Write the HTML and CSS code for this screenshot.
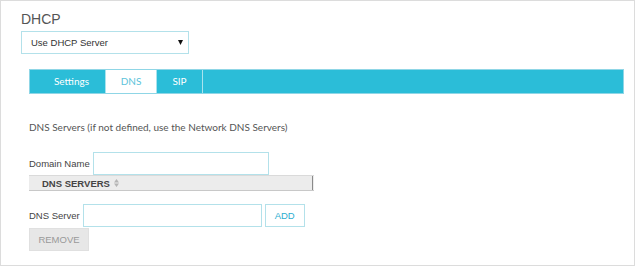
FILE: index.html
```html
<!DOCTYPE html>
<html lang="en">
<head>
  <meta charset="UTF-8">
  <title>DHCP</title>
  <link rel="stylesheet" href="styles.css">
</head>
<body>
  <div class="panel">
    <h2 class="title">DHCP</h2>
    <div class="select">
      <span>Use DHCP Server</span>
      <svg class="caret" width="5" height="5" viewBox="0 0 5 5"><path d="M0 0H5L2.5 5Z" fill="#111"/></svg>
    </div>

    <div class="content">
      <div class="tabs">
        <div class="tab first">Settings</div>
        <div class="tab active">DNS</div>
        <div class="tab sip">SIP</div>
      </div>

      <p class="note">DNS Servers (if not defined, use the Network DNS Servers)</p>

      <div class="row domain-row">
        <label for="domain">Domain Name</label>
        <input id="domain" class="domain" />
      </div>

      <div class="grid-head">
        <div class="col">
          <span>DNS SERVERS</span>
          <svg class="sort" width="5" height="8" viewBox="0 0 5 8"><path d="M0 3.5H5L2.5 0Z M0 4.5H5L2.5 8Z" fill="#b5b5b5"/></svg>
        </div>
        <div class="col-end"></div>
      </div>

      <div class="row server-row">
        <label for="server">DNS Server</label>
        <input id="server" class="server" />
        <button class="add">ADD</button>
      </div>
      <button class="remove">REMOVE</button>
    </div>
  </div>
</body>
</html>
```

FILE: styles.css
```css
body { margin: 0; font-family: "Liberation Sans", Arial, sans-serif; }
.panel { width: 635px; height: 266px; box-sizing: border-box; border: 1px solid #dcdcdc; padding: 0 10px 0 20px; background: #fff; }
.title { margin: 10px 0 4px; font-size: 14px; line-height: 16px; font-weight: normal; color: #555; }

.select { width: 168px; height: 23px; box-sizing: border-box; border: 1px solid #b3e1ea; display: flex; align-items: center; justify-content: space-between; padding: 0 5px 0 9px; font-size: 9.5px; color: #333; }
.caret { display: block; }

.content { margin: 15px 0 0 8px; }
.tabs { display: flex; height: 25px; box-sizing: border-box; background: #2bbdd8; border: 1px solid #8fd6e6; }
.tab { box-sizing: border-box; height: 23px; line-height: 23px; text-align: center; font-family: Lato, sans-serif; font-size: 10px; color: #fff; border-right: 1px solid #a9e3ee; }
.tab.first { width: 76px; padding-left: 8px; }
.tab.active { width: 51px; background: #fff; color: #5cc3da; }
.tab.sip { width: 46px; }

.note { margin: 27px 0 0; font-family: Lato, sans-serif; font-size: 10px; line-height: 13px; color: #555; }

.row { display: flex; align-items: center; gap: 3px; }
.row label { font-size: 9.5px; color: #444; }
.row input { height: 23px; box-sizing: border-box; border: 1px solid #b3e1ea; margin: 0; padding: 0 4px; }
.domain-row { margin-top: 18px; }
.domain { width: 176px; }

.grid-head { display: flex; width: 285px; height: 16px; box-sizing: border-box; background: #ececec; border-top: 1px solid #dadada; border-bottom: 1px solid #c8c8c8; }
.grid-head .col { flex: 1; display: flex; align-items: center; gap: 4px; padding-left: 13px; border-right: 1px solid #8a8a8a; font-size: 9.5px; font-weight: bold; color: #444; }
.grid-head .col-end { width: 1px; }
.sort { display: block; }

.server-row { margin-top: 13px; }
.server { width: 179px; }
.add { width: 40px; height: 23px; margin: 0; padding: 0; background: #fff; border: 1px solid #b3e1ea; font-family: "Liberation Sans", Arial, sans-serif; font-size: 9.5px; color: #2aaed0; }
.remove { display: block; width: 60px; height: 23px; margin: 1px 0 0; padding: 0; background: #e7e7e7; border: 1px solid #e0e0e0; font-family: "Liberation Sans", Arial, sans-serif; font-size: 9.5px; color: #999; }
```
